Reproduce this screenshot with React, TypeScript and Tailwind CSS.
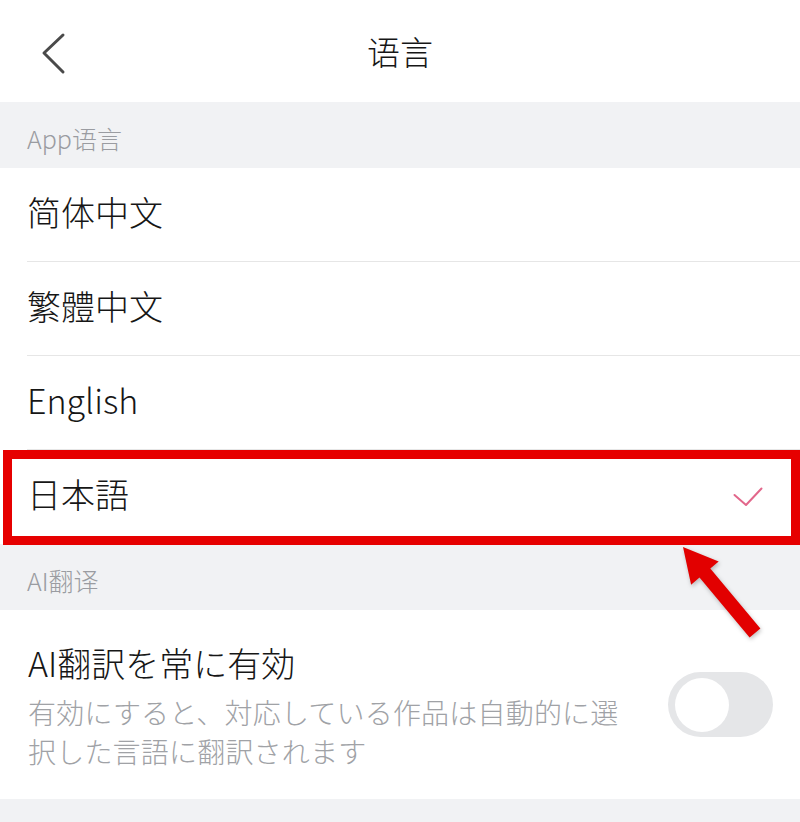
import React from 'react';

const languages = [
  { label: '简体中文', font: 'sc' },
  { label: '繁體中文', font: 'tc' },
  { label: 'English', font: 'sc' },
  { label: '日本語', font: 'jp', selected: true },
];

const fontClass: Record<string, string> = {
  sc: "font-['Noto_Sans_CJK_SC',sans-serif]",
  tc: "font-['Noto_Sans_CJK_TC',sans-serif]",
  jp: "font-['Noto_Sans_CJK_JP',sans-serif]",
};

const SectionLabel: React.FC<{ text: string }> = ({ text }) => (
  <div className="h-[66px] bg-[#f1f2f4] flex items-center px-[27px]">
    <span className="text-[25px] leading-none text-[#9a9ca1] pt-[6px]">{text}</span>
  </div>
);

const App: React.FC = () => {
  return (
    <div className="relative w-[800px] h-[822px] overflow-hidden bg-white font-['Noto_Sans_CJK_SC',sans-serif] font-light text-[#161616]">
      {/* Header */}
      <div className="h-[102px] grid grid-cols-[1fr_auto_1fr] items-center">
        <div className="pl-[36px] flex items-center">
          <svg width="30" height="54" viewBox="0 0 30 54" fill="none">
            <polyline
              points="27,11 8,29 27,48"
              stroke="#4a4a4a"
              strokeWidth="3"
              strokeLinecap="round"
              strokeLinejoin="round"
            />
          </svg>
        </div>
        <h1 className="text-[33px] leading-none font-light">语言</h1>
        <div />
      </div>

      <SectionLabel text="App语言" />

      {/* Language list */}
      <div className="pl-[27px]">
        {languages.map((lang, i) => (
          <div
            key={lang.label}
            className={
              'h-[94px] flex items-center justify-between pr-[37px] ' +
              (i < languages.length - 1 ? 'border-b border-[#e6e6e6]' : '')
            }
          >
            <span className={'text-[34px] leading-none pb-[6px] ' + fontClass[lang.font]}>{lang.label}</span>
            {lang.selected && (
              <svg width="30" height="20" viewBox="0 0 30 20" fill="none">
                <polyline
                  points="1.5,8 13,18 28.5,1.5"
                  stroke="#e2678b"
                  strokeWidth="2"
                  strokeLinecap="round"
                  strokeLinejoin="round"
                />
              </svg>
            )}
          </div>
        ))}
      </div>

      <SectionLabel text="AI翻译" />

      {/* AI translation toggle */}
      <div className="h-[189px] flex items-center justify-between pl-[28px] pr-[27px] font-['Noto_Sans_CJK_JP',sans-serif]">
        <div className="w-[600px] pt-[2px]">
          <div className="text-[34px] leading-[46px]">AI翻訳を常に有効</div>
          <div className="mt-[7px] text-[28px] tracking-[0.2px] leading-[39px] text-[#a0a2a6]">
            有効にすると、対応している作品は自動的に選択した言語に翻訳されます
          </div>
        </div>
        <div className="w-[105px] h-[65px] rounded-full bg-[#e5e6e8] flex items-center pl-[7px]">
          <div className="w-[54px] h-[54px] rounded-full bg-white" />
        </div>
      </div>

      <div className="h-[23px] bg-[#f1f2f4]" />

      {/* Annotation overlay */}
      <div className="absolute left-[3px] top-[450px] w-[797px] h-[95px] border-[9px] border-[#e60000] pointer-events-none" />
      <svg className="absolute inset-0 pointer-events-none" width="800" height="822" viewBox="0 0 800 822">
        <polygon
          points="683,547 718.7,561.5 710.3,568.6 760.4,628.5 749.6,637.5 699.5,577.6 691.1,584.7"
          fill="#e20000"
          style={{ filter: 'drop-shadow(1px 2px 2px rgba(0,0,0,0.25))' }}
        />
      </svg>
    </div>
  );
};

export default App;
